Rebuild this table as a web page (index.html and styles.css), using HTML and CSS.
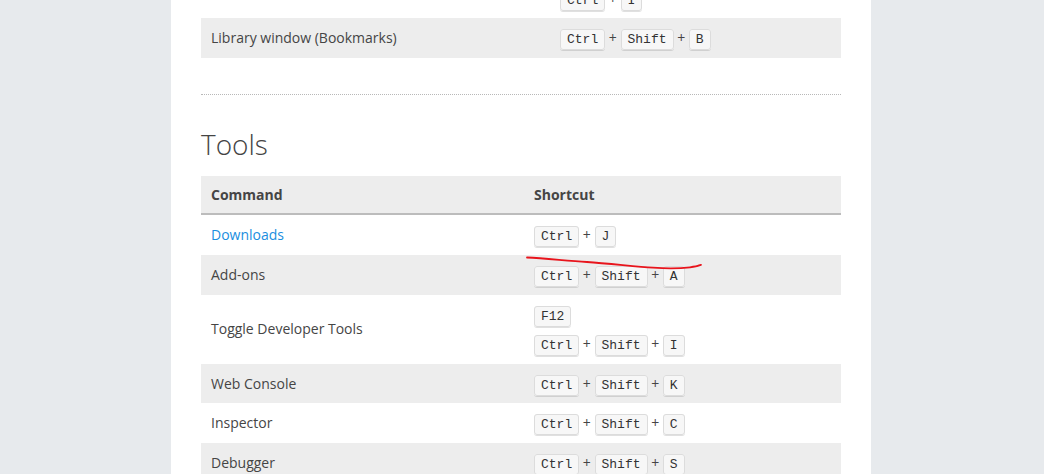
FILE: index.html
```html
<!DOCTYPE html>
<html>
<head>
<meta charset="utf-8">
<link rel="stylesheet" href="styles.css">
</head>
<body>
<main class="page">
  <table class="shortcuts shortcuts-first">
    <colgroup><col class="c1-first"><col></colgroup>
    <tbody>
      <tr><td>Page Info</td><td><div class="keys"><kbd>Ctrl</kbd> + <kbd>Shift</kbd> + <kbd>H</kbd></div><div class="keys keys-next"><kbd>Ctrl</kbd> + <kbd>I</kbd></div></td></tr>
      <tr><td>Library window (Bookmarks)</td><td><kbd>Ctrl</kbd> + <kbd>Shift</kbd> + <kbd>B</kbd></td></tr>
    </tbody>
  </table>
  <hr class="sep">
  <h2 class="section-title">Tools</h2>
  <table class="shortcuts">
    <colgroup><col class="c1"><col></colgroup>
    <thead>
      <tr><th>Command</th><th>Shortcut</th></tr>
    </thead>
    <tbody>
      <tr><td><a class="link" href="#">Downloads</a></td><td><kbd>Ctrl</kbd> + <kbd>J</kbd></td></tr>
      <tr><td>Add-ons</td><td><kbd>Ctrl</kbd> + <kbd>Shift</kbd> + <kbd>A</kbd></td></tr>
      <tr><td>Toggle Developer Tools</td><td><div class="keys"><kbd>F12</kbd></div><div class="keys keys-next"><kbd>Ctrl</kbd> + <kbd>Shift</kbd> + <kbd>I</kbd></div></td></tr>
      <tr><td>Web Console</td><td><kbd>Ctrl</kbd> + <kbd>Shift</kbd> + <kbd>K</kbd></td></tr>
      <tr><td>Inspector</td><td><kbd>Ctrl</kbd> + <kbd>Shift</kbd> + <kbd>C</kbd></td></tr>
      <tr><td>Debugger</td><td><kbd>Ctrl</kbd> + <kbd>Shift</kbd> + <kbd>S</kbd></td></tr>
      <tr><td>Style Editor</td><td><kbd>Shift</kbd> + <kbd>F7</kbd></td></tr>
    </tbody>
  </table>
</main>
<svg class="annotation" width="1044" height="474" viewBox="0 0 1044 474">
  <path d="M527 257.5 C 545 258.5, 565 260.5, 587 262 S 635 266.5, 653 267.7 S 680 268.5, 690 267.3 S 698 265.5, 701 264.8" fill="none" stroke="#e8141c" stroke-width="1.8" stroke-linecap="round"/>
</svg>
</body>
</html>
```
FILE: styles.css
```css
html, body {
  margin: 0;
  padding: 0;
}
body {
  background: #e7eaed;
  font-family: "Open Sans", "Liberation Sans", sans-serif;
  font-size: 14px;
  line-height: 1.4;
  color: #454545;
  height: 474px;
  overflow: hidden;
  position: relative;
}
.page {
  width: 640px;
  margin: 0 auto;
  padding: 0 30px 40px;
  background: #fff;
  margin-top: -51px;
  min-height: 600px;
  position: relative;
  left: -1px;
}
.shortcuts {
  width: 640px;
  border-collapse: collapse;
  table-layout: fixed;
}
.c1-first { width: 349px; }
.c1 { width: 323px; }
.shortcuts td {
  padding: 10px;
  vertical-align: middle;
  text-align: left;
}
.shortcuts th {
  padding: 9px 10px;
  text-align: left;
  font-weight: 700;
  background: #ededed;
  border-bottom: 2px solid #bcbcbc;
}
.shortcuts tbody tr:nth-child(2n) td { background: #ededed; }
.shortcuts-first tbody tr:nth-child(2n+1) td { background: #fff; }
.link {
  color: #1a8ee0;
  text-decoration: none;
}
kbd {
  font-family: "Liberation Mono", "Courier New", monospace;
  font-size: 13px;
  line-height: 1;
  color: #333;
  background: #f7f7f7;
  border: 1px solid #dcdcdc;
  border-radius: 3px;
  box-shadow: 0 1px 0 rgba(0,0,0,0.12);
  padding: 2px 6px;
}
.keys-next { margin-top: 10px; }
.sep {
  border: 0;
  border-top: 1px dotted #b8b8b8;
  margin: 36px 0 0;
  height: 0;
}
.section-title {
  font-size: 28px;
  font-weight: 300;
  line-height: 34px;
  margin: 32px 0 15px;
  color: #444;
}
.annotation {
  position: absolute;
  left: 0;
  top: 0;
  pointer-events: none;
}
```
